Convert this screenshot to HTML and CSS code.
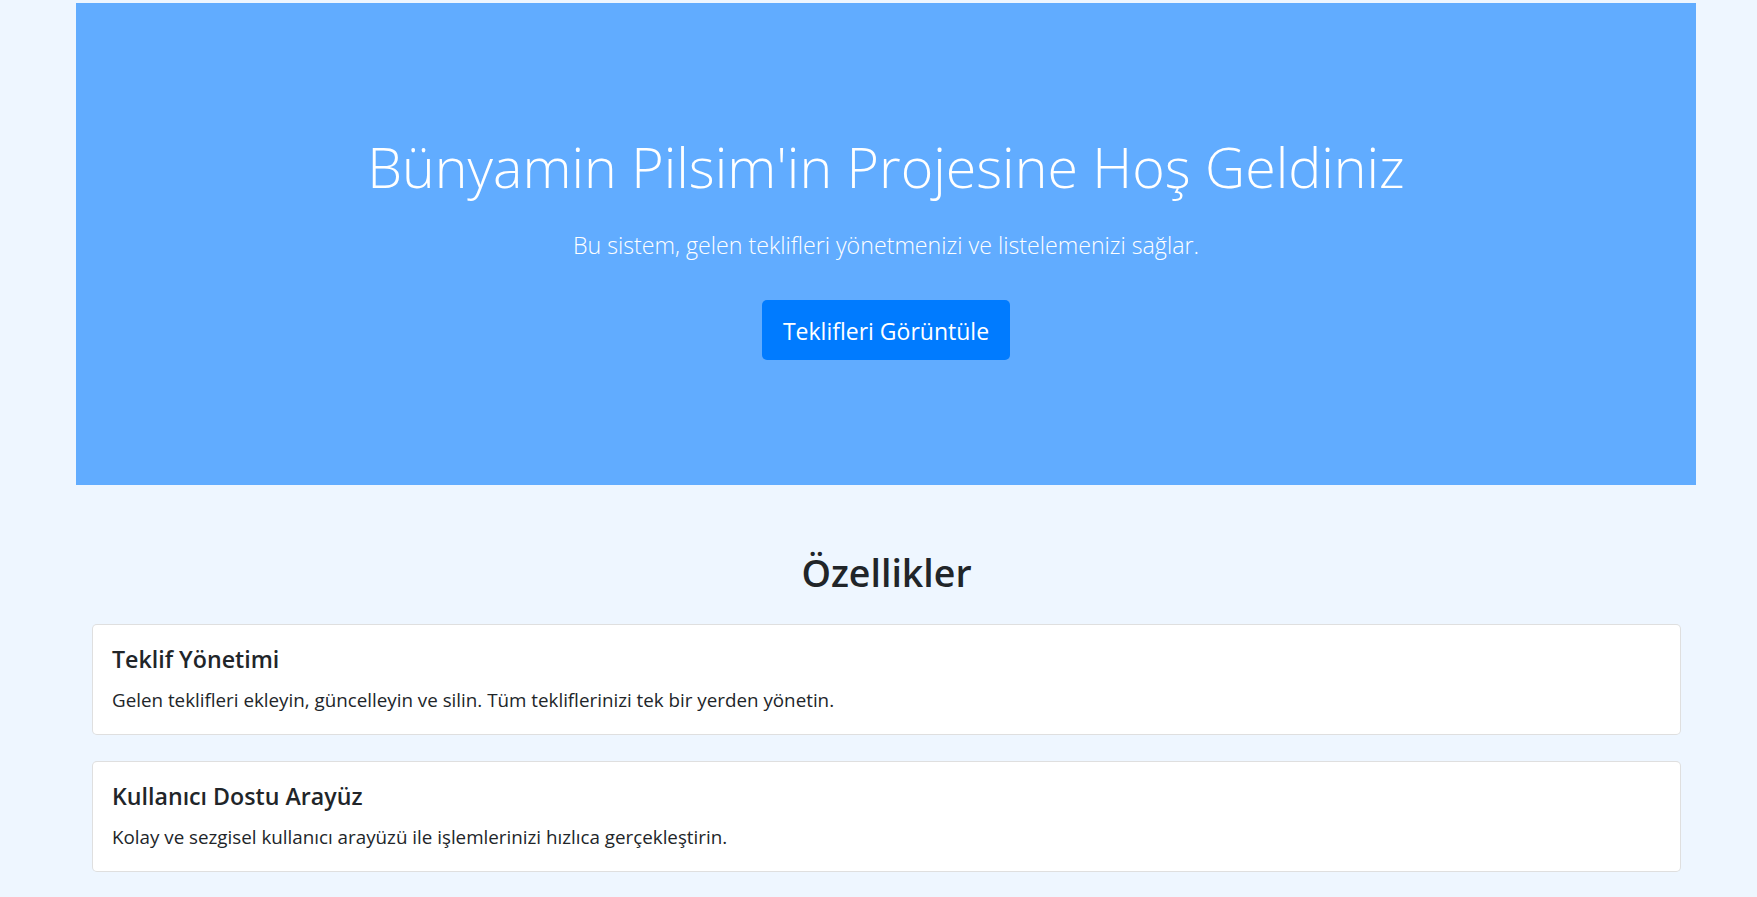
FILE: index.html
```html
<!DOCTYPE html>
<html lang="tr">
<head>
<meta charset="utf-8">
<title>Bünyamin Pilsim'in Projesi</title>
<link rel="stylesheet" href="styles.css">
</head>
<body>
<div class="page">
  <section class="hero">
    <h1 class="hero-title">Bünyamin Pilsim'in Projesine Hoş Geldiniz</h1>
    <p class="hero-lead">Bu sistem, gelen teklifleri yönetmenizi ve listelemenizi sağlar.</p>
    <a class="btn-primary" href="#">Teklifleri Görüntüle</a>
  </section>
  <section class="features">
    <h2 class="features-title">Özellikler</h2>
    <div class="card">
      <h4 class="card-title">Teklif Yönetimi</h4>
      <p class="card-text">Gelen teklifleri ekleyin, güncelleyin ve silin. Tüm tekliflerinizi tek bir yerden yönetin.</p>
    </div>
    <div class="card">
      <h4 class="card-title">Kullanıcı Dostu Arayüz</h4>
      <p class="card-text">Kolay ve sezgisel kullanıcı arayüzü ile işlemlerinizi hızlıca gerçekleştirin.</p>
    </div>
  </section>
</div>
</body>
</html>
```

FILE: styles.css
```css
* { box-sizing: border-box; }
html, body { margin: 0; padding: 0; }
body {
  background: #eef6ff;
  color: #212529;
  font-family: "Open Sans", "Noto Sans", "Liberation Sans", sans-serif;
}
.page {
  padding: 3px 61px 10px 76px;
}
.hero {
  background: #61acff;
  color: #fff;
  text-align: center;
  padding: 131px 20px 125px;
  display: flex;
  flex-direction: column;
  align-items: center;
}
.hero-title {
  margin: 0 0 27px;
  font-size: 55.5px;
  font-weight: 300;
  line-height: 1.2;
}
.hero-lead {
  margin: 0 0 38px;
  font-size: 23.2px;
  font-weight: 300;
  line-height: 1.5;
}
.btn-primary {
  display: inline-block;
  background: #007bff;
  color: #fff;
  text-decoration: none;
  font-size: 23px;
  line-height: 1.5;
  padding: 13.5px 21px 12px;
  border-radius: 5px;
}
.features {
  padding: 64.5px 15px 0 16px;
}
.features-title {
  margin: 0 0 29px;
  text-align: center;
  font-size: 37.5px;
  font-weight: 600;
  line-height: 1.2;
}
.card {
  background: #fff;
  border: 1px solid rgba(0, 0, 0, 0.125);
  border-radius: 5px;
  padding: 21px 20px 20px 19px;
  margin-bottom: 26px;
}
.card-title {
  margin: 0 0 12px;
  font-size: 23.2px;
  font-weight: 600;
  line-height: 1.2;
}
.card-text {
  margin: 0;
  font-size: 18.8px;
  line-height: 1.5;
}
```
